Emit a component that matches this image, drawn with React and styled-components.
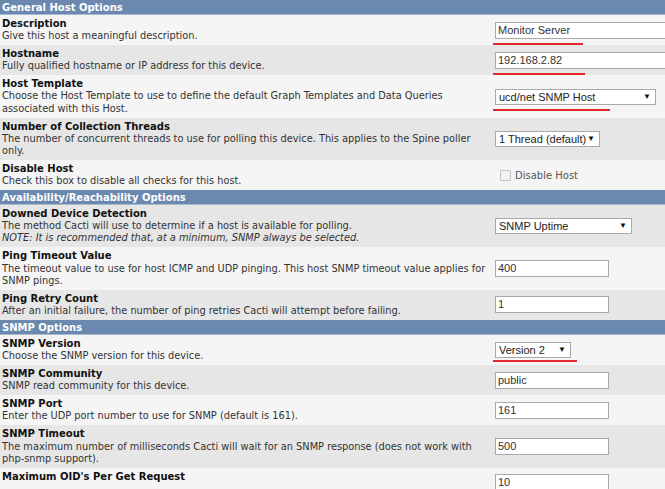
import styled, { createGlobalStyle } from 'styled-components';

const GlobalStyle = createGlobalStyle`
  html, body {
    margin: 0;
    padding: 0;
    background: #fff;
    overflow: hidden;
  }
  body {
    font-family: "DejaVu Sans", Verdana, sans-serif;
  }
`;

const sections = [
  {
    title: 'General Host Options',
    rows: [
      {
        title: 'Description',
        desc: ['Give this host a meaningful description.'],
        field: { kind: 'text', value: 'Monitor Server', width: 200, mark: 90, markGap: 4 },
      },
      {
        title: 'Hostname',
        desc: ['Fully qualified hostname or IP address for this device.'],
        field: { kind: 'text', value: '192.168.2.82', width: 200, mark: 92, markGap: 4 },
      },
      {
        title: 'Host Template',
        desc: [
          'Choose the Host Template to use to define the default Graph Templates and Data Queries associated with this Host.',
        ],
        field: { kind: 'select', value: 'ucd/net SNMP Host', width: 161, mark: 117, markGap: 4 },
      },
      {
        title: 'Number of Collection Threads',
        desc: [
          'The number of concurrent threads to use for polling this device. This applies to the Spine poller only.',
        ],
        field: { kind: 'select', value: '1 Thread (default)', width: 105 },
      },
      {
        title: 'Disable Host',
        desc: ['Check this box to disable all checks for this host.'],
        field: { kind: 'check', value: 'Disable Host' },
      },
    ],
  },
  {
    title: 'Availability/Reachability Options',
    rows: [
      {
        title: 'Downed Device Detection',
        desc: ['The method Cacti will use to determine if a host is available for polling.'],
        note: 'NOTE: It is recommended that, at a minimum, SNMP always be selected.',
        field: { kind: 'select', value: 'SNMP Uptime', width: 137 },
      },
      {
        title: 'Ping Timeout Value',
        desc: [
          'The timeout value to use for host ICMP and UDP pinging. This host SNMP timeout value applies for SNMP pings.',
        ],
        field: { kind: 'text', value: '400', width: 114 },
      },
      {
        title: 'Ping Retry Count',
        desc: ['After an initial failure, the number of ping retries Cacti will attempt before failing.'],
        field: { kind: 'text', value: '1', width: 114 },
      },
    ],
  },
  {
    title: 'SNMP Options',
    rows: [
      {
        title: 'SNMP Version',
        desc: ['Choose the SNMP version for this device.'],
        field: { kind: 'select', value: 'Version 2', width: 76, mark: 84, markGap: 2 },
      },
      {
        title: 'SNMP Community',
        desc: ['SNMP read community for this device.'],
        field: { kind: 'text', value: 'public', width: 114 },
      },
      {
        title: 'SNMP Port',
        desc: ['Enter the UDP port number to use for SNMP (default is 161).'],
        field: { kind: 'text', value: '161', width: 114 },
      },
      {
        title: 'SNMP Timeout',
        desc: [
          'The maximum number of milliseconds Cacti will wait for an SNMP response (does not work with php-snmp support).',
        ],
        field: { kind: 'text', value: '500', width: 114 },
      },
      {
        title: "Maximum OID's Per Get Request",
        desc: [],
        field: { kind: 'text', value: '10', width: 114 },
      },
    ],
  },
];

const Page = styled.div`
  width: 665px;
  height: 489px;
  overflow: hidden;
`;

const Header = styled.div`
  background: #6b88ae;
  border-bottom: 1px solid #a9b9cf;
  color: #fff;
  font-weight: bold;
  font-size: 10px;
  line-height: 13px;
  padding: 1px 2px 0;
`;

const Row = styled.div`
  display: grid;
  grid-template-columns: 494px 1fr;
  align-items: center;
  min-height: 30px;
  background: ${(p) => (p.$alt ? '#e6e6e6' : '#f5f5f5')};
`;

const Label = styled.div`
  align-self: start;
  padding: 3px 0 3px 2px;
  font-size: 9.8px;
  line-height: 12.1px;
  color: #333;
`;

const Title = styled.div`
  font-size: 10px;
  font-weight: bold;
  color: #111;
`;

const Note = styled.div`
  font-style: italic;
`;

const Value = styled.div`
  padding-left: 1px;
  display: flex;
  align-items: center;
  white-space: nowrap;
`;

const Marked = styled.span`
  position: relative;
  display: inline-flex;

  &::after {
    content: '';
    position: absolute;
    left: -2px;
    bottom: ${(p) => -p.$gap - 2}px;
    width: ${(p) => p.$w}px;
    height: 2px;
    background: #e3262c;
  }
`;

const TextBox = styled.div`
  box-sizing: border-box;
  width: ${(p) => p.$w}px;
  height: 17px;
  border: 1px solid #a9a9a9;
  background: #fff;
  font-family: "Liberation Sans", Arial, sans-serif;
  font-size: 11px;
  line-height: 15px;
  padding: 0 2px;
  color: #333;
`;

const SelectBox = styled.div`
  box-sizing: border-box;
  width: ${(p) => p.$w}px;
  height: 16px;
  border: 1px solid #a9a9a9;
  background: #fff;
  font-family: "Liberation Sans", Arial, sans-serif;
  font-size: 11px;
  line-height: 14px;
  padding: 0 4px 0 3px;
  color: #222;
  display: flex;
  justify-content: space-between;
  align-items: center;
`;

const Arrow = styled.span`
  font-size: 8px;
  color: #111;
`;

const CheckWrap = styled.label`
  display: flex;
  align-items: center;
  gap: 4px;
  margin-left: 5px;
  font-size: 10px;
  color: #555;
`;

const CheckBox = styled.span`
  box-sizing: border-box;
  width: 11px;
  height: 11px;
  border: 1px solid #c4c4c4;
  background: #f2f2f2;
  border-radius: 1px;
`;

const Field = ({ field }) => {
  let el;
  if (field.kind === 'text') {
    el = <TextBox $w={field.width}>{field.value}</TextBox>;
  } else if (field.kind === 'select') {
    el = (
      <SelectBox $w={field.width}>
        <span>{field.value}</span>
        <Arrow>▼</Arrow>
      </SelectBox>
    );
  } else {
    el = (
      <CheckWrap>
        <CheckBox />
        {field.value}
      </CheckWrap>
    );
  }
  if (field.mark) {
    return (
      <Marked $w={field.mark} $gap={field.markGap}>
        {el}
      </Marked>
    );
  }
  return el;
};

export default function App() {
  let n = 0;
  return (
    <Page>
      <GlobalStyle />
      {sections.map((s) => (
        <section key={s.title}>
          <Header>{s.title}</Header>
          {s.rows.map((r) => {
            const alt = n++ % 2 === 1;
            return (
              <Row key={r.title} $alt={alt}>
                <Label>
                  <Title>{r.title}</Title>
                  {r.desc.map((d) => (
                    <div key={d}>{d}</div>
                  ))}
                  {r.note && <Note>{r.note}</Note>}
                </Label>
                <Value>
                  <Field field={r.field} />
                </Value>
              </Row>
            );
          })}
        </section>
      ))}
    </Page>
  );
}
